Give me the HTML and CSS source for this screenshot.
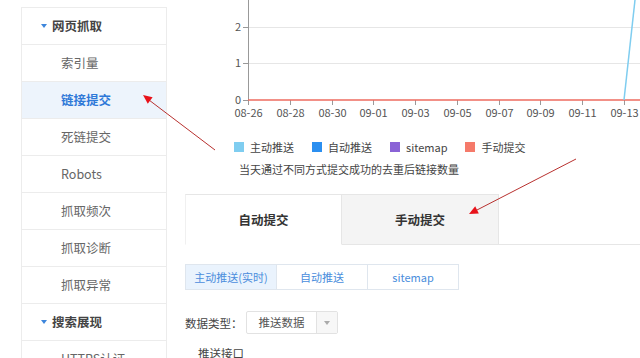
FILE: index.html
```html
<!DOCTYPE html>
<html lang="zh-CN">
<head>
    <meta charset="UTF-8">
    <meta name="viewport" content="width=device-width, initial-scale=1.0">
    <title>链接提交</title>
    <link rel="stylesheet" href="styles.css">
</head>
<body>
    <div class="page">
        <ul class="sidebar">
            <li class="group">网页抓取</li>
            <li>索引量</li>
            <li class="active">链接提交</li>
            <li>死链提交</li>
            <li>Robots</li>
            <li>抓取频次</li>
            <li>抓取诊断</li>
            <li>抓取异常</li>
            <li class="group">搜索展现</li>
            <li>HTTPS认证</li>
        </ul>

        <div class="main">
            <svg class="chart" width="456" height="124" viewBox="0 0 456 124">
                <g stroke="#e6e6e6" stroke-width="1">
                    <line x1="63" y1="27.5" x2="456" y2="27.5"/>
                    <line x1="63" y1="63.5" x2="456" y2="63.5"/>
                </g>
                <g stroke="#999" stroke-width="1">
                    <line x1="63.5" y1="0" x2="63.5" y2="100"/>
                    <line x1="58" y1="27.5" x2="63" y2="27.5"/>
                    <line x1="58" y1="63.5" x2="63" y2="63.5"/>
                    <line x1="58" y1="100.5" x2="63" y2="100.5"/>
                </g>
                <g class="ylabels" text-anchor="end">
                    <text x="56" y="31">2</text>
                    <text x="56" y="67">1</text>
                    <text x="56" y="104">0</text>
                </g>
                <g id="xaxis" class="xlabels" text-anchor="middle"></g>
                <line x1="63" y1="100" x2="456" y2="100" stroke="#ee6b5f" stroke-width="1.5"/>
                <line x1="439" y1="100" x2="450" y2="0" stroke="#7fcdf0" stroke-width="1.5"/>
            </svg>

            <div class="legend">
                <span class="item"><i style="background:#7fcdf0"></i>主动推送</span>
                <span class="item"><i style="background:#2b8ff0"></i>自动推送</span>
                <span class="item"><i style="background:#8a63d6"></i>sitemap</span>
                <span class="item"><i style="background:#f57a6a"></i>手动提交</span>
            </div>
            <p class="note">当天通过不同方式提交成功的去重后链接数量</p>

            <div class="tabs">
                <div class="tab current">自动提交</div>
                <div class="tab">手动提交</div>
                <div class="tab-rest"></div>
            </div>

            <div class="subtabs">
                <div class="subtab current">主动推送(实时)</div>
                <div class="subtab">自动推送</div>
                <div class="subtab">sitemap</div>
            </div>

            <div class="field">
                <label>数据类型：</label>
                <div class="select">
                    <span class="value">推送数据</span>
                    <span class="caret"></span>
                </div>
            </div>

            <div class="api">推送接口</div>
        </div>
    </div>

    <svg class="arrows" width="640" height="358" viewBox="0 0 640 358">
        <line x1="215" y1="150" x2="149" y2="100" stroke="#b8312f" stroke-width="1"/>
        <polygon points="143,95 152.6,97.3 147.8,103.7" fill="#e8121a"/>
        <line x1="576" y1="159" x2="476" y2="210.5" stroke="#b8312f" stroke-width="1"/>
        <polygon points="469,214 478.8,213.5 475.2,206.3" fill="#e8121a"/>
    </svg>

    <script>
        // x axis ticks, every two days
        var labels = ['08-26', '08-28', '08-30', '09-01', '09-03', '09-05', '09-07', '09-09', '09-11', '09-13'];
        var axis = document.getElementById('xaxis');
        var ns = 'http://www.w3.org/2000/svg';
        for (var i = 0; i < labels.length; i++) {
            var x = Math.round(63 + i * 41.78) + 0.5;
            var tick = document.createElementNS(ns, 'line');
            tick.setAttribute('x1', x);
            tick.setAttribute('x2', x);
            tick.setAttribute('y1', 100);
            tick.setAttribute('y2', 105);
            tick.setAttribute('stroke', '#999');
            axis.appendChild(tick);

            var t = document.createElementNS(ns, 'text');
            t.setAttribute('x', x);
            t.setAttribute('y', 117);
            t.textContent = labels[i];
            axis.appendChild(t);
        }
    </script>
</body>
</html>
```

FILE: styles.css
```css
html, body {
    height: 358px;
    overflow: hidden;
}

body {
    margin: 0;
    background-color: #ffffff;
    color: #333333;
    font-family: "Noto Sans CJK SC", "Noto Sans", sans-serif;
    position: relative;
}

.page {
    display: flex;
    align-items: flex-start;
}

/* sidebar */

.sidebar {
    list-style: none;
    margin: 7px 0 0 21px;
    padding: 0;
    width: 144px;
    border-left: 1px solid #ececec;
    border-right: 1px solid #ececec;
    flex-shrink: 0;
}

.sidebar li {
    height: 37px;
    box-sizing: border-box;
    border-top: 1px solid #ececec;
    padding-left: 39px;
    line-height: 36px;
    font-size: 12.5px;
    color: #666666;
}

.sidebar li.group {
    padding-left: 19px;
    font-weight: bold;
    color: #444444;
    display: flex;
    align-items: center;
}

.sidebar li.group::before {
    content: "";
    width: 0;
    height: 0;
    border-left: 3px solid transparent;
    border-right: 3px solid transparent;
    border-top: 4px solid #3d86dc;
    margin-right: 5px;
}

.sidebar li.active {
    background-color: #edf4fc;
    color: #2f79d8;
    font-weight: bold;
}

/* main area */

.main {
    margin-left: 18px;
    width: 456px;
    flex-shrink: 0;
}

.chart {
    display: block;
    font-size: 11px;
    fill: #555555;
}

.legend {
    display: flex;
    gap: 18px;
    margin-top: 14px;
    padding-left: 49px;
    height: 18px;
    align-items: center;
    font-size: 11px;
    color: #444444;
}

.legend .item {
    display: flex;
    align-items: center;
}

.legend i {
    width: 10px;
    height: 10px;
    margin-right: 6px;
}

.note {
    margin: 4px 0 0 54px;
    line-height: 18px;
    font-size: 11px;
    color: #444444;
}

/* tabs */

.tabs {
    display: flex;
    margin-top: 16px;
    height: 51px;
}

.tab {
    width: 157px;
    box-sizing: border-box;
    display: flex;
    align-items: center;
    justify-content: center;
    font-size: 12.5px;
    font-weight: bold;
    color: #333333;
    border-top: 1px solid #e6e6e6;
    border-bottom: 1px solid #e6e6e6;
    background-color: #f4f4f4;
    border-right: 1px solid #e6e6e6;
}

.tab.current {
    background-color: #ffffff;
    border-left: 1px solid #f0f0f0;
    border-bottom-color: transparent;
}

.tab-rest {
    flex: 1;
    border-bottom: 1px solid #e6e6e6;
}

.subtabs {
    display: flex;
    margin-top: 19px;
}

.subtab {
    width: 92px;
    height: 26px;
    box-sizing: border-box;
    border: 1px solid #dfe6ee;
    margin-left: -1px;
    display: flex;
    align-items: center;
    justify-content: center;
    font-size: 11px;
    color: #4a8ddc;
}

.subtab:first-child {
    margin-left: 0;
}

.subtab.current {
    background-color: #eaf3fd;
}

.field {
    display: flex;
    align-items: center;
    margin-top: 21px;
    font-size: 11.5px;
    color: #444444;
}

.field label {
    width: 61px;
}

.select {
    display: flex;
    width: 92px;
    height: 23px;
    box-sizing: border-box;
    border: 1px solid #e2e2e2;
    border-radius: 2px;
}

.select .value {
    width: 69px;
    border-right: 1px solid #e2e2e2;
    text-align: center;
    line-height: 21px;
    color: #555555;
}

.select .caret {
    flex: 1;
    display: flex;
    align-items: center;
    justify-content: center;
    background-color: #f7f7f7;
}

.select .caret::before {
    content: "";
    border-left: 3px solid transparent;
    border-right: 3px solid transparent;
    border-top: 4px solid #aaaaaa;
}

.api {
    margin: 11px 0 0 13px;
    font-size: 11.5px;
    color: #444444;
}

/* annotation arrows drawn over the screenshot */

.arrows {
    position: absolute;
    top: 0;
    left: 0;
    pointer-events: none;
}
```
